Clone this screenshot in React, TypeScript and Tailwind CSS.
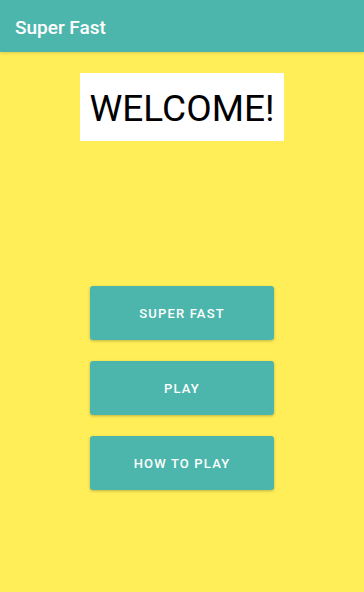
export default function App() {
  return (
    <div className="w-[364px] h-[592px] bg-[#FFEE58] flex flex-col" style={{ fontFamily: "Roboto, 'Noto Sans', sans-serif" }}>
      <div className="h-[52px] bg-[#4DB6AC] flex items-center pl-[15px] shadow-[0_1px_3px_rgba(0,0,0,0.15)]">
        <span className="text-white text-[19px] font-medium leading-none mt-[2px]">Super Fast</span>
      </div>
      <div className="flex justify-center mt-[21px]">
        <div className="w-[204px] h-[68px] bg-white flex items-center justify-center">
          <span className="text-black text-[37px] leading-none pt-[2px]">WELCOME!</span>
        </div>
      </div>
      <div className="flex flex-col items-center mt-[145px] gap-[21px]">
        {["SUPER FAST", "PLAY", "HOW TO PLAY"].map((t) => (
          <div
            key={t}
            className="w-[184px] h-[54px] bg-[#4DB6AC] rounded-[3px] flex items-center justify-center shadow-[0_1px_3px_rgba(0,0,0,0.25)]"
          >
            <span className="text-white text-[13px] font-medium tracking-[0.09em] mt-[2px]">{t}</span>
          </div>
        ))}
      </div>
    </div>
  );
}
